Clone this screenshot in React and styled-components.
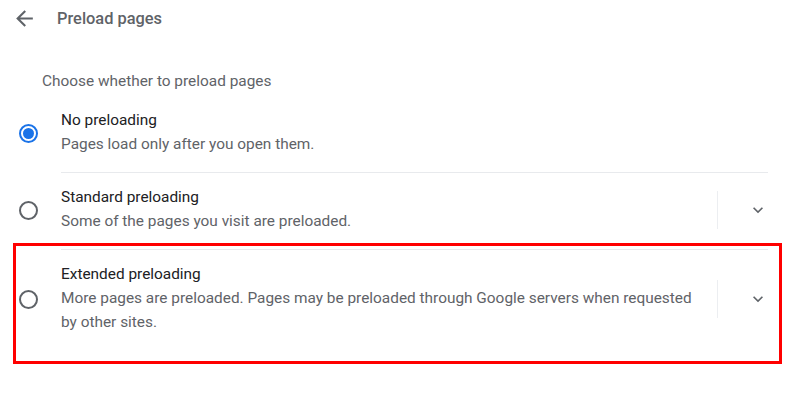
import React from "react";
import styled, { createGlobalStyle } from "styled-components";

const GlobalStyle = createGlobalStyle`
  html, body {
    margin: 0;
    padding: 0;
    background: #ffffff;
  }
  body {
    font-family: Roboto, "Liberation Sans", Arial, sans-serif;
    -webkit-font-smoothing: antialiased;
  }
`;

const Page = styled.div`
  position: relative;
  width: 791px;
  height: 410px;
  background: #ffffff;
  overflow: hidden;
`;

const Header = styled.div`
  display: flex;
  align-items: center;
  height: 36px;
  padding-left: 12px;
`;

const BackButton = styled.button`
  display: flex;
  align-items: center;
  justify-content: center;
  width: 25px;
  height: 25px;
  padding: 0;
  margin: 0 20px 0 0;
  border: none;
  background: transparent;
  color: #5f6368;
  cursor: pointer;
`;

const Title = styled.h1`
  margin: 0;
  font-size: 16.4px;
  font-weight: 500;
  color: #5f6368;
`;

const Subtitle = styled.div`
  margin: 33px 0 2px 42px;
  font-size: 15.4px;
  line-height: 24px;
  color: #5f6368;
`;

const List = styled.div`
  display: flex;
  flex-direction: column;
  margin-left: 19px;
  width: 749px;
`;

const Row = styled.div`
  display: flex;
  align-items: stretch;
`;

const RadioCell = styled.div`
  display: flex;
  align-items: center;
  width: 19px;
  margin-right: 23px;
`;

const Radio = styled.div`
  box-sizing: border-box;
  width: 19px;
  height: 19px;
  border-radius: 50%;
  border: 2px solid ${(p) => (p.$checked ? "#1a73e8" : "#5f6368")};
  display: flex;
  align-items: center;
  justify-content: center;

  &::after {
    content: "";
    display: ${(p) => (p.$checked ? "block" : "none")};
    width: 11px;
    height: 11px;
    border-radius: 50%;
    background: #1a73e8;
  }
`;

const Body = styled.div`
  flex: 1;
  display: flex;
  align-items: center;
  border-top: 1px solid ${(p) => (p.$first ? "transparent" : "#e8eaed")};
  padding: 13px 0 16px;
`;

const Texts = styled.div`
  flex: 1;
  min-width: 0;
`;

const OptionTitle = styled.div`
  font-size: 15.4px;
  line-height: 23px;
  color: #202124;
`;

const OptionDesc = styled.div`
  font-size: 15.4px;
  line-height: 24px;
  color: #5f6368;
  padding-right: 20px;
`;

const ExpandArea = styled.div`
  display: flex;
  align-items: center;
  align-self: center;
  height: 38px;
  border-left: 1px solid #eceef1;
  padding-left: 30px;
`;

const ExpandButton = styled.button`
  display: flex;
  align-items: center;
  justify-content: center;
  width: 20px;
  height: 20px;
  padding: 0;
  border: none;
  background: transparent;
  color: #5f6368;
  cursor: pointer;
`;

const Highlight = styled.div`
  position: absolute;
  left: 13px;
  top: 243px;
  width: 769px;
  height: 121px;
  box-sizing: border-box;
  border: 3px solid #ff0000;
  pointer-events: none;
`;

const ArrowBack = () => (
  <svg width="25" height="25" viewBox="0 0 24 24" fill="currentColor">
    <path d="M20 11H7.83l5.59-5.59L12 4l-8 8 8 8 1.41-1.41L7.83 13H20v-2z" />
  </svg>
);

const ExpandMore = () => (
  <svg width="20" height="20" viewBox="0 0 24 24" fill="currentColor">
    <path d="M16.59 8.59L12 13.17 7.41 8.59 6 10l6 6 6-6z" />
  </svg>
);

const options = [
  {
    title: "No preloading",
    desc: "Pages load only after you open them.",
    checked: true,
    expandable: false,
  },
  {
    title: "Standard preloading",
    desc: "Some of the pages you visit are preloaded.",
    checked: false,
    expandable: true,
  },
  {
    title: "Extended preloading",
    desc:
      "More pages are preloaded. Pages may be preloaded through Google servers when requested by other sites.",
    checked: false,
    expandable: true,
  },
];

export default function App() {
  return (
    <Page>
      <GlobalStyle />
      <Header>
        <BackButton aria-label="Back">
          <ArrowBack />
        </BackButton>
        <Title>Preload pages</Title>
      </Header>
      <Subtitle>Choose whether to preload pages</Subtitle>
      <List>
        {options.map((o, i) => (
          <Row key={o.title}>
            <RadioCell>
              <Radio $checked={o.checked} />
            </RadioCell>
            <Body $first={i === 0}>
              <Texts>
                <OptionTitle>{o.title}</OptionTitle>
                <OptionDesc>{o.desc}</OptionDesc>
              </Texts>
              {o.expandable && (
                <ExpandArea>
                  <ExpandButton aria-label="Expand">
                    <ExpandMore />
                  </ExpandButton>
                </ExpandArea>
              )}
            </Body>
          </Row>
        ))}
      </List>
      <Highlight />
    </Page>
  );
}
